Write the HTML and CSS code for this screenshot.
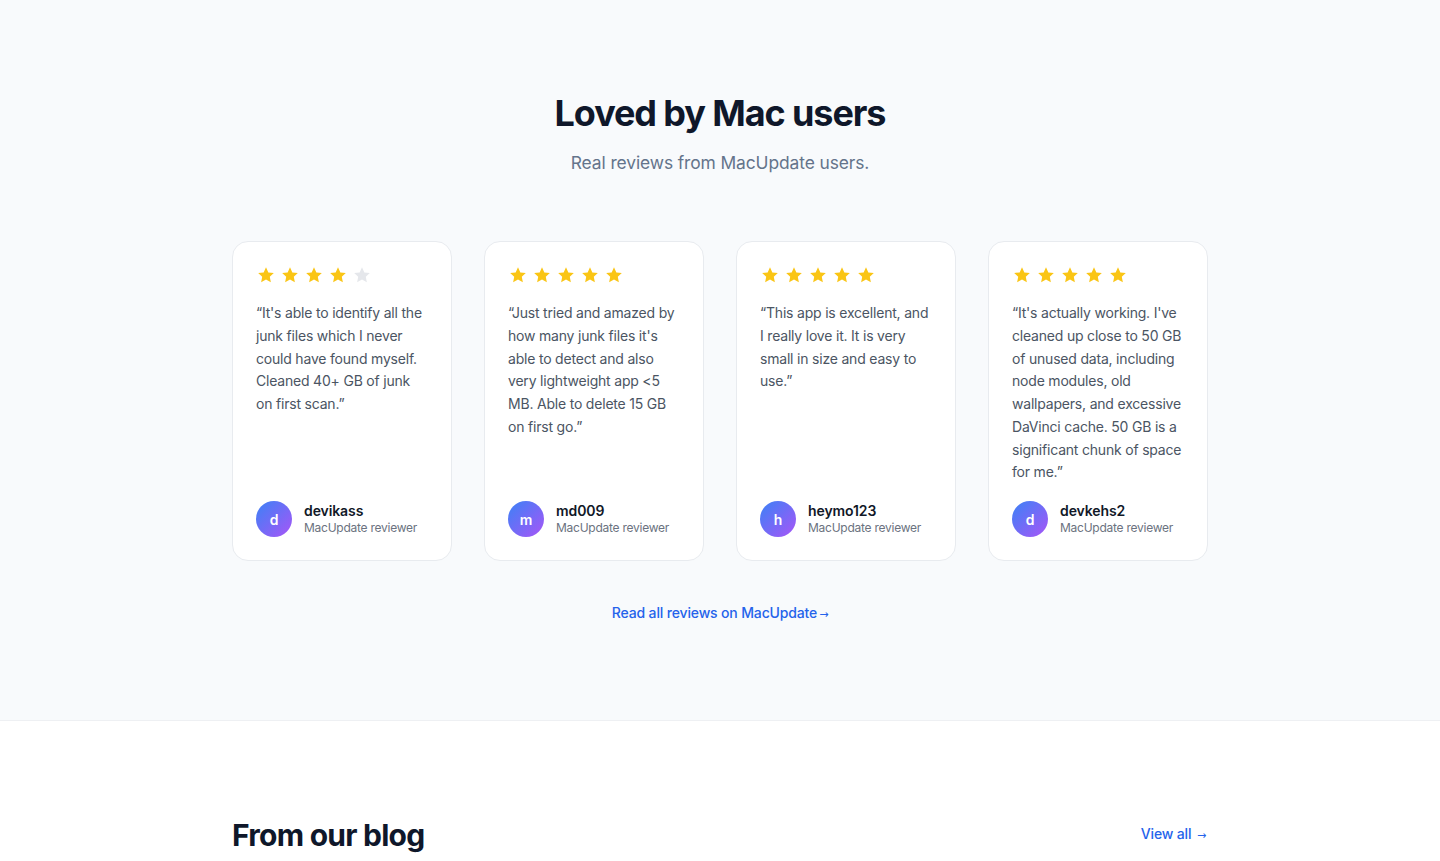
FILE: index.html
```html
<!DOCTYPE html>
<html lang="en">
<head>
<meta charset="utf-8">
<title>Loved by Mac users</title>
<link rel="stylesheet" href="styles.css">
</head>
<body>
<section class="reviews">
  <div class="container">
    <h2 class="title">Loved by Mac users</h2>
    <p class="subtitle">Real reviews from MacUpdate users.</p>
    <div class="grid">
      <article class="card">
        <div class="stars">
          <svg class="star on" viewBox="0 0 20 20"><path d="M10 1.5l2.6 5.6 6.1.7-4.5 4.2 1.2 6-5.4-3-5.4 3 1.2-6L1.3 7.8l6.1-.7z"/></svg>
          <svg class="star on" viewBox="0 0 20 20"><path d="M10 1.5l2.6 5.6 6.1.7-4.5 4.2 1.2 6-5.4-3-5.4 3 1.2-6L1.3 7.8l6.1-.7z"/></svg>
          <svg class="star on" viewBox="0 0 20 20"><path d="M10 1.5l2.6 5.6 6.1.7-4.5 4.2 1.2 6-5.4-3-5.4 3 1.2-6L1.3 7.8l6.1-.7z"/></svg>
          <svg class="star on" viewBox="0 0 20 20"><path d="M10 1.5l2.6 5.6 6.1.7-4.5 4.2 1.2 6-5.4-3-5.4 3 1.2-6L1.3 7.8l6.1-.7z"/></svg>
          <svg class="star off" viewBox="0 0 20 20"><path d="M10 1.5l2.6 5.6 6.1.7-4.5 4.2 1.2 6-5.4-3-5.4 3 1.2-6L1.3 7.8l6.1-.7z"/></svg>
        </div>
        <p class="quote">“It's able to identify all the junk files which I never could have found myself. Cleaned 40+ GB of junk on first scan.”</p>
        <div class="author">
          <div class="avatar">d</div>
          <div class="meta"><div class="name">devikass</div><div class="role">MacUpdate reviewer</div></div>
        </div>
      </article>
      <article class="card">
        <div class="stars">
          <svg class="star on" viewBox="0 0 20 20"><path d="M10 1.5l2.6 5.6 6.1.7-4.5 4.2 1.2 6-5.4-3-5.4 3 1.2-6L1.3 7.8l6.1-.7z"/></svg>
          <svg class="star on" viewBox="0 0 20 20"><path d="M10 1.5l2.6 5.6 6.1.7-4.5 4.2 1.2 6-5.4-3-5.4 3 1.2-6L1.3 7.8l6.1-.7z"/></svg>
          <svg class="star on" viewBox="0 0 20 20"><path d="M10 1.5l2.6 5.6 6.1.7-4.5 4.2 1.2 6-5.4-3-5.4 3 1.2-6L1.3 7.8l6.1-.7z"/></svg>
          <svg class="star on" viewBox="0 0 20 20"><path d="M10 1.5l2.6 5.6 6.1.7-4.5 4.2 1.2 6-5.4-3-5.4 3 1.2-6L1.3 7.8l6.1-.7z"/></svg>
          <svg class="star on" viewBox="0 0 20 20"><path d="M10 1.5l2.6 5.6 6.1.7-4.5 4.2 1.2 6-5.4-3-5.4 3 1.2-6L1.3 7.8l6.1-.7z"/></svg>
        </div>
        <p class="quote">“Just tried and amazed by how many junk files it's able to detect and also very lightweight app &lt;5 MB. Able to delete 15 GB on first go.”</p>
        <div class="author">
          <div class="avatar">m</div>
          <div class="meta"><div class="name">md009</div><div class="role">MacUpdate reviewer</div></div>
        </div>
      </article>
      <article class="card">
        <div class="stars">
          <svg class="star on" viewBox="0 0 20 20"><path d="M10 1.5l2.6 5.6 6.1.7-4.5 4.2 1.2 6-5.4-3-5.4 3 1.2-6L1.3 7.8l6.1-.7z"/></svg>
          <svg class="star on" viewBox="0 0 20 20"><path d="M10 1.5l2.6 5.6 6.1.7-4.5 4.2 1.2 6-5.4-3-5.4 3 1.2-6L1.3 7.8l6.1-.7z"/></svg>
          <svg class="star on" viewBox="0 0 20 20"><path d="M10 1.5l2.6 5.6 6.1.7-4.5 4.2 1.2 6-5.4-3-5.4 3 1.2-6L1.3 7.8l6.1-.7z"/></svg>
          <svg class="star on" viewBox="0 0 20 20"><path d="M10 1.5l2.6 5.6 6.1.7-4.5 4.2 1.2 6-5.4-3-5.4 3 1.2-6L1.3 7.8l6.1-.7z"/></svg>
          <svg class="star on" viewBox="0 0 20 20"><path d="M10 1.5l2.6 5.6 6.1.7-4.5 4.2 1.2 6-5.4-3-5.4 3 1.2-6L1.3 7.8l6.1-.7z"/></svg>
        </div>
        <p class="quote">“This app is excellent, and I really love it. It is very small in size and easy to use.”</p>
        <div class="author">
          <div class="avatar">h</div>
          <div class="meta"><div class="name">heymo123</div><div class="role">MacUpdate reviewer</div></div>
        </div>
      </article>
      <article class="card">
        <div class="stars">
          <svg class="star on" viewBox="0 0 20 20"><path d="M10 1.5l2.6 5.6 6.1.7-4.5 4.2 1.2 6-5.4-3-5.4 3 1.2-6L1.3 7.8l6.1-.7z"/></svg>
          <svg class="star on" viewBox="0 0 20 20"><path d="M10 1.5l2.6 5.6 6.1.7-4.5 4.2 1.2 6-5.4-3-5.4 3 1.2-6L1.3 7.8l6.1-.7z"/></svg>
          <svg class="star on" viewBox="0 0 20 20"><path d="M10 1.5l2.6 5.6 6.1.7-4.5 4.2 1.2 6-5.4-3-5.4 3 1.2-6L1.3 7.8l6.1-.7z"/></svg>
          <svg class="star on" viewBox="0 0 20 20"><path d="M10 1.5l2.6 5.6 6.1.7-4.5 4.2 1.2 6-5.4-3-5.4 3 1.2-6L1.3 7.8l6.1-.7z"/></svg>
          <svg class="star on" viewBox="0 0 20 20"><path d="M10 1.5l2.6 5.6 6.1.7-4.5 4.2 1.2 6-5.4-3-5.4 3 1.2-6L1.3 7.8l6.1-.7z"/></svg>
        </div>
        <p class="quote">“It's actually working. I've cleaned up close to 50 GB of unused data, including node modules, old wallpapers, and excessive DaVinci cache. 50 GB is a significant chunk of space for me.”</p>
        <div class="author">
          <div class="avatar">d</div>
          <div class="meta"><div class="name">devkehs2</div><div class="role">MacUpdate reviewer</div></div>
        </div>
      </article>
    </div>
    <div class="more"><a href="#" class="link">Read all reviews on MacUpdate<span class="arrow">→</span></a></div>
  </div>
</section>
<section class="blog">
  <div class="container blog-head">
    <h2 class="blog-title">From our blog</h2>
    <a href="#" class="link view-all">View all <span class="arrow">→</span></a>
  </div>
</section>
</body>
</html>
```

FILE: styles.css
```css
* { box-sizing: border-box; }
html, body { margin: 0; padding: 0; }
body {
  font-family: "Inter", "Liberation Sans", sans-serif;
  color: #111827;
  background: #ffffff;
  -webkit-font-smoothing: antialiased;
}
.container {
  width: 976px;
  margin: 0 auto;
}
.reviews {
  background: #f8fafc;
  border-bottom: 1px solid #eef0f3;
  padding: 93px 0 93px;
}
.title {
  margin: 0;
  text-align: center;
  font-size: 36px;
  line-height: 40px;
  font-weight: 700;
  letter-spacing: -1.1px;
  color: #0f172a;
}
.subtitle {
  margin: 16px 0 0;
  text-align: center;
  font-size: 17.4px;
  line-height: 28px;
  letter-spacing: -0.1px;
  color: #64748b;
}
.grid {
  margin-top: 64px;
  display: grid;
  grid-template-columns: repeat(4, 1fr);
  gap: 32px;
}
.card {
  background: #ffffff;
  border: 1px solid #e8ebef;
  border-radius: 16px;
  padding: 23px;
  display: flex;
  flex-direction: column;
  min-height: 320px;
}
.stars {
  display: flex;
  gap: 6px;
  height: 20px;
  align-items: center;
  margin-left: 1px;
}
.star { width: 18px; height: 18px; }
.star.on path { fill: #fac515; }
.star.off path { fill: #e5e7eb; }
.quote {
  margin: 17px 0 0;
  font-size: 14px;
  line-height: 22.75px;
  letter-spacing: -0.2px;
  color: #4b5563;
}
.author {
  margin-top: auto;
  padding-top: 16px;
  display: flex;
  align-items: center;
  gap: 12px;
}
.avatar {
  width: 36px;
  height: 36px;
  border-radius: 50%;
  background: linear-gradient(135deg, #3b82f6, #a855f7);
  color: #fff;
  font-weight: 600;
  font-size: 14px;
  display: flex;
  align-items: center;
  justify-content: center;
  flex-shrink: 0;
}
.name {
  font-size: 14px;
  line-height: 18px;
  font-weight: 600;
  letter-spacing: -0.1px;
  color: #111827;
}
.role {
  font-size: 12px;
  line-height: 16px;
  letter-spacing: -0.25px;
  color: #6b7280;
}
.more {
  margin-top: 40px;
  text-align: center;
  font-size: 14px;
  line-height: 24px;
}
.link {
  color: #2563eb;
  text-decoration: none;
  font-weight: 500;
  letter-spacing: -0.15px;
}
.arrow {
  margin-left: 2px;
  font-family: "DejaVu Sans", sans-serif;
  font-size: 11px;
  font-weight: 400;
}
.blog {
  background: #ffffff;
  padding: 96px 0 40px;
}
.blog-head {
  display: flex;
  justify-content: space-between;
  align-items: center;
}
.blog-title {
  margin: 0;
  font-size: 30px;
  line-height: 36px;
  font-weight: 700;
  letter-spacing: -0.75px;
  color: #0f172a;
}
.view-all {
  font-size: 14px;
  line-height: 20px;
  margin-right: 2px;
}
```
